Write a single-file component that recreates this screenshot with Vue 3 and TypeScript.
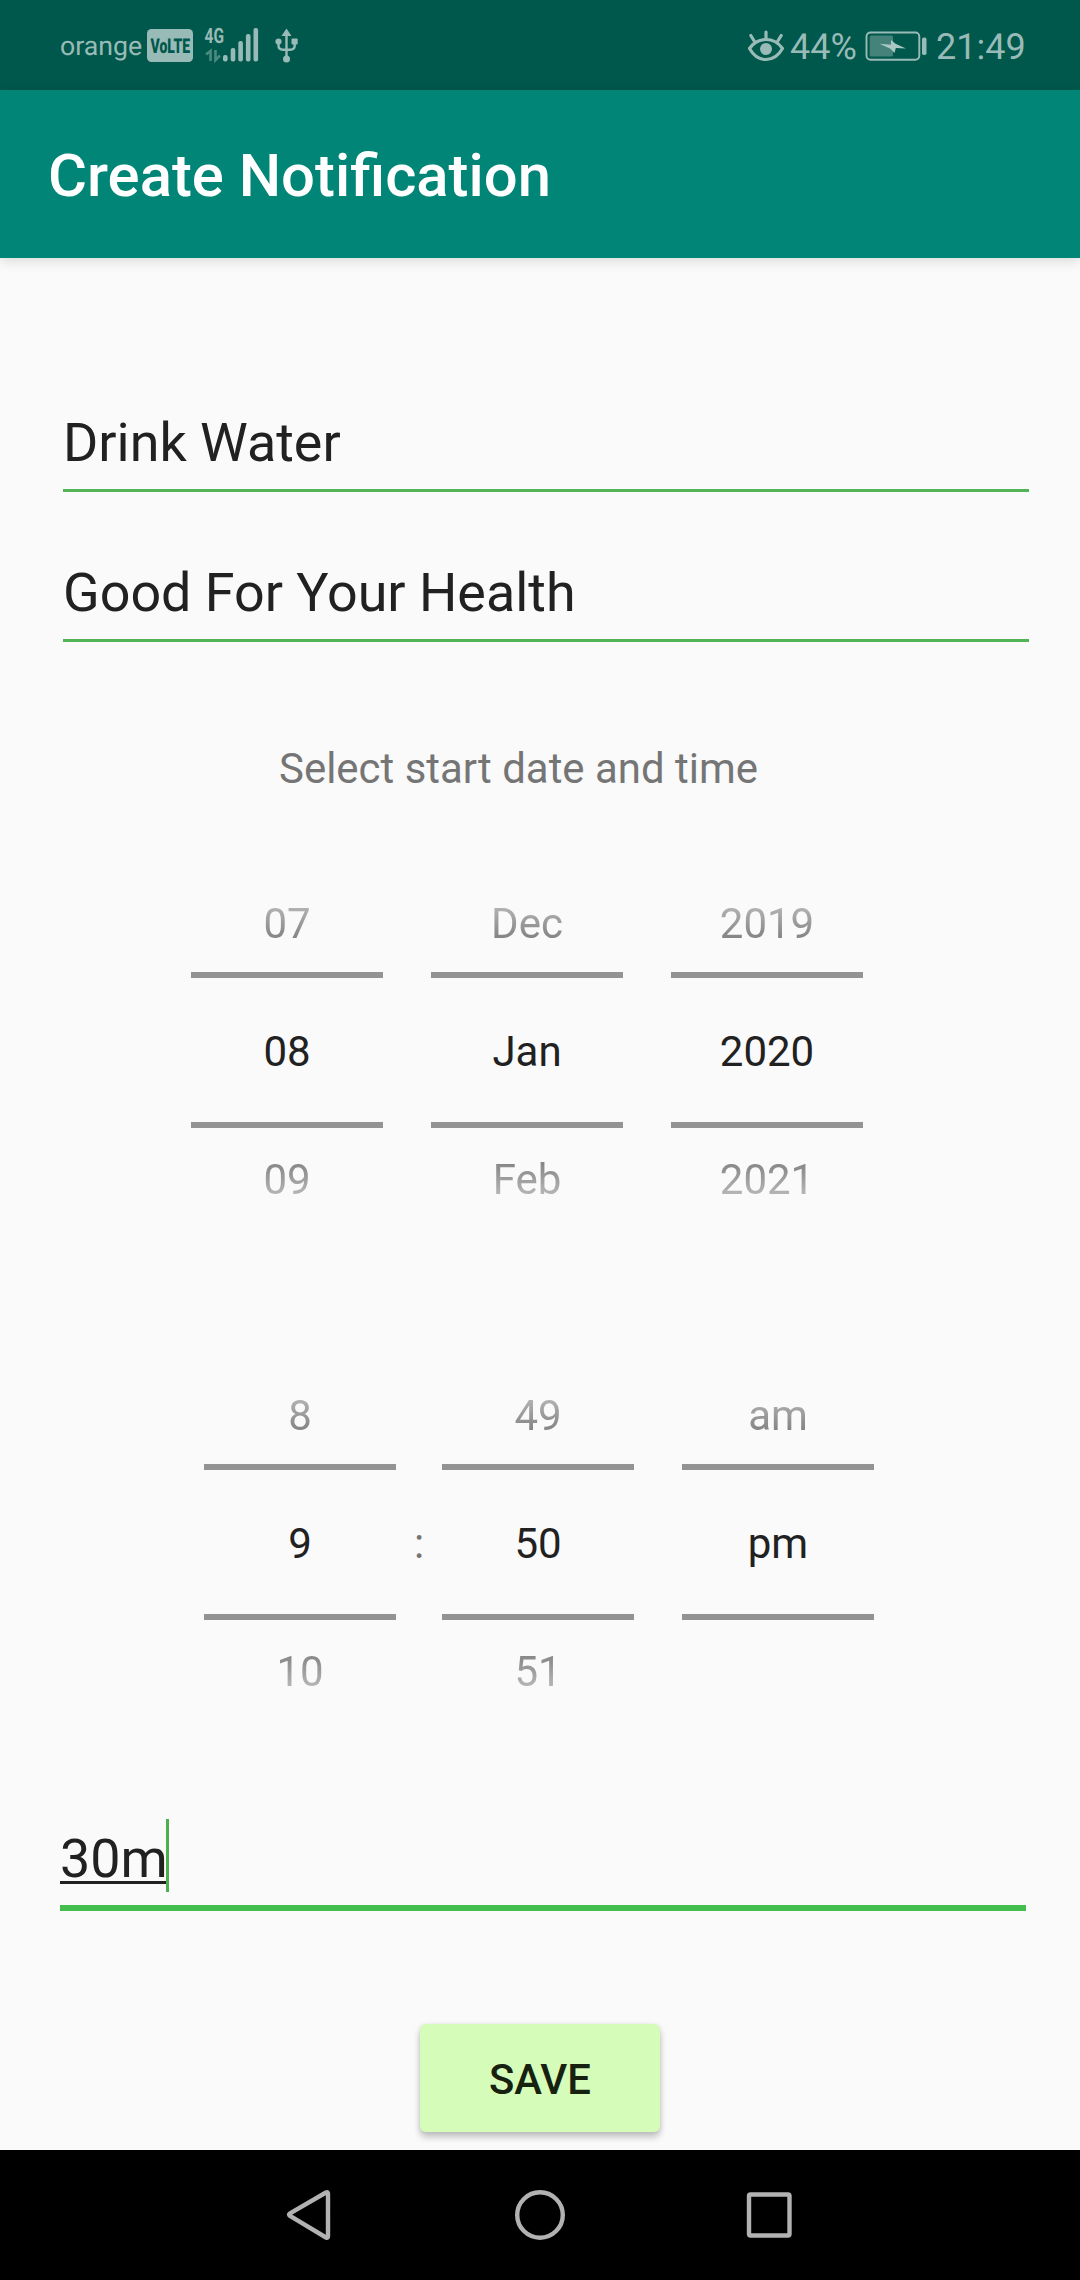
<script setup lang="ts">
interface Wheel {
  id: string
  previous: string
  current: string
  next: string
}

const title = 'Create Notification'
const fields: string[] = ['Drink Water', 'Good For Your Health']
const interval = '30m'

const dateWheels: Wheel[] = [
  { id: 'day', previous: '07', current: '08', next: '09' },
  { id: 'month', previous: 'Dec', current: 'Jan', next: 'Feb' },
  { id: 'year', previous: '2019', current: '2020', next: '2021' },
]

const timeWheels: Wheel[] = [
  { id: 'hour', previous: '8', current: '9', next: '10' },
  { id: 'minute', previous: '49', current: '50', next: '51' },
  { id: 'period', previous: 'am', current: 'pm', next: '' },
]
</script>

<template>
  <div class="screen">
    <header class="status">
      <span class="carrier">orange</span>
      <svg class="volte" width="46" height="33" viewBox="0 0 46 33">
        <rect width="46" height="33" rx="4.5" fill="#99bbb7" />
        <text x="3.5" y="23.5" textLength="39.5" lengthAdjust="spacingAndGlyphs" class="volte-text">VoLTE</text>
      </svg>
      <svg class="signal" width="56" height="36" viewBox="204 27 56 36" fill="#99bbb7">
        <text x="204.5" y="43" textLength="19.5" lengthAdjust="spacingAndGlyphs" class="net-text">4G</text>
        <g fill="none" stroke="#4a8a81" stroke-width="2.6">
          <path d="M206 54.5l4.500-3.500V61" />
          <path d="M215.500 50v10l4.500-4.500" />
        </g>
        <rect x="223" y="55" width="4.600" height="6.500" rx="2" />
        <rect x="230.700" y="48" width="4.600" height="13.500" rx="2" />
        <rect x="238.300" y="41" width="4.600" height="20.500" rx="2" />
        <rect x="245.900" y="34" width="4.600" height="27.500" rx="2" />
        <rect x="253.500" y="28" width="4.600" height="33.500" rx="2" />
      </svg>
      <svg class="usb" width="24" height="36" viewBox="275 28 24 36" fill="#99bbb7">
        <path d="M286.500 28.500l5 7.500h-10z" />
        <circle cx="286.500" cy="59" r="3.500" />
        <circle cx="278.500" cy="41.500" r="3.100" />
        <rect x="291.500" y="38.500" width="6.200" height="6" rx="1" />
        <path d="M286.500 34v24M278.500 42v3.500q0 4.200 4.500 4.200h7.200q4.500 0 4.500-4.200V42" fill="none" stroke="#99bbb7" stroke-width="2.400" />
      </svg>
      <span class="grow"></span>
      <svg class="eye" width="38" height="34" viewBox="747 29 38 34" fill="none" stroke="#99bbb7" stroke-width="3.200" stroke-linecap="round" stroke-linejoin="round">
        <path d="M749.500 48.500C754 42 760 39.500 766 39.500s12 2.500 16.500 9C778 56.500 772 59.500 766 59.500s-12-3-16.500-11z" />
        <circle cx="766" cy="49" r="6" fill="#99bbb7" stroke="none" />
        <path d="M766 32v7M750.800 35.500l3.700 6M781.200 35.500l-3.700 6" />
      </svg>
      <span class="percent">44%</span>
      <svg class="battery" width="62" height="30" viewBox="865 30.500 62 30">
        <rect x="866.500" y="32" width="52.800" height="27.300" rx="4" fill="none" stroke="#99bbb7" stroke-width="1.900" />
        <rect x="869.700" y="35" width="23.300" height="21" rx="1.500" fill="#45837a" />
        <path d="M879.500 43.300l11.500 1v-4.800l4.500 3.700 10.500 4.800-10.200-.5-1.300 5-4-4.300z" fill="#a9c8c4" />
        <rect x="922" y="37" width="4.500" height="17.500" rx="1.800" fill="#99bbb7" />
      </svg>
      <span class="clock">21:49</span>
    </header>

    <div class="appbar">
      <h1>{{ title }}</h1>
    </div>

    <main class="form">
      <div v-for="field in fields" :key="field" class="field">{{ field }}</div>

      <p class="hint">Select start date and time</p>

      <section class="picker date">
        <div v-for="wheel in dateWheels" :key="wheel.id" class="wheel">
          <span class="previous">{{ wheel.previous }}</span>
          <span class="current">{{ wheel.current }}</span>
          <span class="next">{{ wheel.next }}</span>
        </div>
      </section>

      <section class="picker time">
        <template v-for="(wheel, index) in timeWheels" :key="wheel.id">
          <span v-if="index === 1" class="colon">:</span>
          <div class="wheel">
            <span class="previous">{{ wheel.previous }}</span>
            <span class="current">{{ wheel.current }}</span>
            <span class="next">{{ wheel.next }}</span>
          </div>
        </template>
      </section>

      <div class="field focused">
        <span class="composing">{{ interval }}</span>
        <span class="caret"></span>
      </div>

      <button type="button" class="save">SAVE</button>
    </main>

    <nav class="navbar">
      <svg width="50" height="56" viewBox="284 2187 50 56">
        <path d="M290 2213.300q-2 1.300 0 2.600L326 2237.500q2 1 2-1.200v-42.600q0-2.200-2-1.200z" />
      </svg>
      <svg class="home" width="56" height="56" viewBox="512 2187 56 56">
        <ellipse cx="540" cy="2215" rx="22.800" ry="22.700" />
      </svg>
      <svg width="50" height="56" viewBox="744 2187 50 56">
        <rect x="749" y="2194.500" width="40.500" height="41" rx="1.500" />
      </svg>
    </nav>
  </div>
</template>

<style>
body {
  margin: 0;
  background: #fafafa;
}
</style>

<style scoped>
.screen {
  width: 1080px;
  height: 2280px;
  display: flex;
  flex-direction: column;
  overflow: hidden;
  background: #fafafa;
  color: #212121;
  font-family: Roboto, 'Liberation Sans', sans-serif;
}
svg {
  display: block;
  flex: none;
  overflow: visible;
}
.status {
  height: 90px;
  flex: none;
  box-sizing: border-box;
  padding: 0 54px 0 60px;
  display: flex;
  align-items: center;
  background: #00574b;
  color: #99bbb7;
  white-space: nowrap;
  text-rendering: geometricPrecision;
}
.carrier {
  width: 87px;
  padding-top: 2px;
  font-size: 26.7px;
  line-height: 40px;
}
.volte {
  margin-top: 1px;
}
.volte-text {
  font: 900 20.5px Roboto, sans-serif;
  fill: #00574b;
}
.net-text {
  font: 700 21px Roboto, sans-serif;
}
.signal {
  margin-left: 11px;
}
.usb {
  margin-top: 2px;
  margin-left: 15px;
}
.grow {
  flex: 1;
}
.eye {
  margin-top: 2px;
}
.percent {
  width: 75px;
  margin-left: 5px;
  padding-top: 4px;
  font-size: 36px;
  line-height: 50px;
}
.battery {
  margin-top: 1px;
}
.clock {
  width: 90px;
  margin-left: 9px;
  padding-top: 4px;
  font-size: 36px;
  line-height: 50px;
}
.appbar {
  height: 168px;
  flex: none;
  box-sizing: border-box;
  padding: 4px 48px 0;
  display: flex;
  align-items: center;
  background: #008577;
  box-shadow: 0 3px 12px rgba(0, 0, 0, 0.13);
}
h1 {
  margin: 0;
  color: #fff;
  font-size: 59.8px;
  font-weight: 500;
  line-height: 80px;
}
.form {
  height: 1892px;
  flex: none;
  display: flex;
  flex-direction: column;
  box-sizing: border-box;
  padding-top: 149px;
}
.field {
  width: 966px;
  margin-left: 63px;
  margin-bottom: 65px;
  padding-bottom: 10px;
  border-bottom: 3px solid #51b457;
  font-size: 53.85px;
  line-height: 72px;
}
.hint {
  margin: 37px 0 66px 279px;
  color: #757575;
  font-size: 41.95px;
  line-height: 50px;
}
.picker {
  display: flex;
  height: 384px;
  font-size: 42px;
}
.date {
  gap: 48px;
  padding-left: 191px;
  margin-bottom: 108px;
}
.time {
  padding-left: 204px;
  margin-bottom: 87px;
}
.time .wheel:last-child {
  margin-left: 48px;
}
.wheel {
  width: 192px;
  display: flex;
  flex-direction: column;
  text-align: center;
}
.previous {
  height: 112px;
  line-height: 127px;
  -webkit-mask-image: linear-gradient(transparent, rgba(0, 0, 0, 0.78));
  mask-image: linear-gradient(transparent, rgba(0, 0, 0, 0.78));
}
.current {
  height: 144px;
  line-height: 147px;
  border: solid #939393;
  border-width: 6px 0;
}
.next {
  height: 116px;
  line-height: 103px;
  -webkit-mask-image: linear-gradient(rgba(0, 0, 0, 0.78), transparent 96%);
  mask-image: linear-gradient(rgba(0, 0, 0, 0.78), transparent 96%);
}
.colon {
  width: 46px;
  padding-top: 118px;
  color: #757575;
  line-height: 147px;
  text-align: center;
}
.focused {
  display: flex;
  margin-left: 60px;
  margin-bottom: 113px;
  border-bottom: 6px solid #43bd4e;
}
.composing {
  text-decoration: underline;
  text-decoration-thickness: 3px;
  text-underline-offset: 4px;
  text-decoration-skip-ink: none;
}
.caret {
  width: 3px;
  height: 73px;
  margin: -4px 0 -1px -2px;
  background: #4caf50;
}
.save {
  align-self: center;
  width: 240px;
  height: 108px;
  padding: 3px 0 0;
  border: 0;
  border-radius: 6px;
  background: #d6fcba;
  color: #16210f;
  font: 500 41.8px Roboto, sans-serif;
  box-shadow: 0 5px 7px rgba(0, 0, 0, 0.24), 0 0 4px rgba(0, 0, 0, 0.08);
}
.navbar {
  height: 130px;
  flex: none;
  display: flex;
  align-items: center;
  justify-content: space-between;
  box-sizing: border-box;
  padding: 0 286px 0 284px;
  background: #000;
  position: relative;
}
.home {
  margin-left: 2px;
}
.navbar path,
.navbar ellipse,
.navbar rect {
  fill: none;
  stroke: #b2b2b2;
  stroke-width: 4.4;
  stroke-linejoin: round;
}
</style>
